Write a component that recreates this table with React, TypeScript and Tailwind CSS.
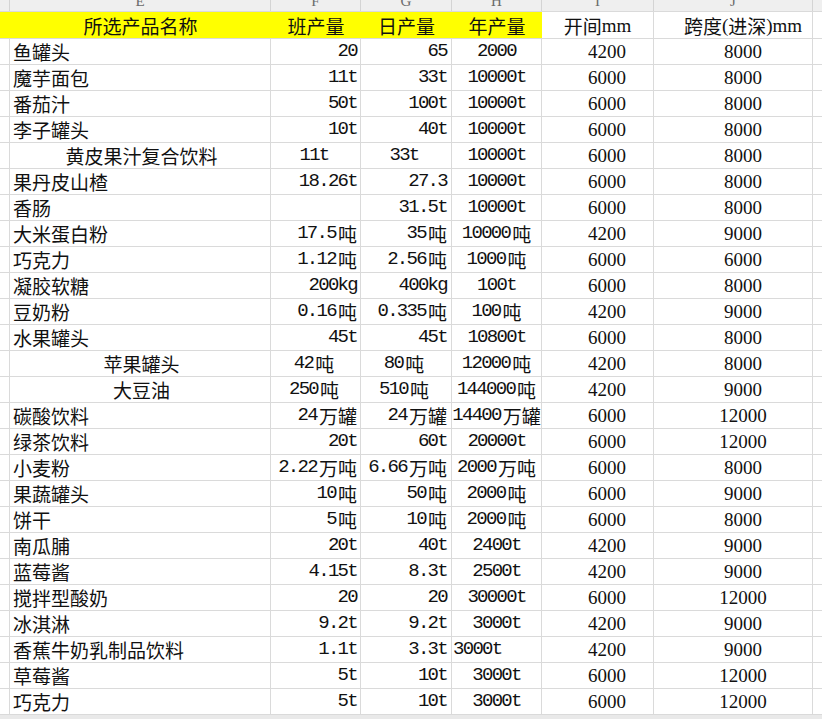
import React from "react";

type Align = "l" | "c" | "r";

type Row = {
  name: string;
  na?: Align;
  f: string;
  fa?: Align;
  g: string;
  ga?: Align;
  h: string;
  ha?: Align;
  i: string;
  j: string;
};

const rows: Row[] = [
  { name: "鱼罐头", f: "20", g: "65", h: "2000", i: "4200", j: "8000" },
  { name: "魔芋面包", f: "11t", g: "33t", h: "10000t", i: "6000", j: "8000" },
  { name: "番茄汁", f: "50t", g: "100t", h: "10000t", i: "6000", j: "8000" },
  { name: "李子罐头", f: "10t", g: "40t", h: "10000t", i: "6000", j: "8000" },
  { name: "黄皮果汁复合饮料", na: "c", f: "11t", fa: "c", g: "33t", ga: "c", h: "10000t", i: "6000", j: "8000" },
  { name: "果丹皮山楂", f: "18.26t", g: "27.3", h: "10000t", i: "6000", j: "8000" },
  { name: "香肠", f: "", g: "31.5t", h: "10000t", i: "6000", j: "8000" },
  { name: "大米蛋白粉", f: "17.5吨", g: "35吨", h: "10000吨", i: "4200", j: "9000" },
  { name: "巧克力", f: "1.12吨", g: "2.56吨", h: "1000吨", i: "6000", j: "6000" },
  { name: "凝胶软糖", f: "200kg", g: "400kg", h: "100t", i: "6000", j: "8000" },
  { name: "豆奶粉", f: "0.16吨", g: "0.335吨", h: "100吨", i: "4200", j: "9000" },
  { name: "水果罐头", f: "45t", g: "45t", h: "10800t", i: "6000", j: "8000" },
  { name: "苹果罐头", na: "c", f: "42吨", fa: "c", g: "80吨", ga: "c", h: "12000吨", i: "4200", j: "8000" },
  { name: "大豆油", na: "c", f: "250吨", fa: "c", g: "510吨", ga: "c", h: "144000吨", i: "4200", j: "9000" },
  { name: "碳酸饮料", f: "24万罐", g: "24万罐", h: "14400万罐", i: "6000", j: "12000" },
  { name: "绿茶饮料", f: "20t", g: "60t", h: "20000t", i: "6000", j: "12000" },
  { name: "小麦粉", f: "2.22万吨", g: "6.66万吨", h: "2000万吨", i: "6000", j: "8000" },
  { name: "果蔬罐头", f: "10吨", g: "50吨", h: "2000吨", i: "6000", j: "9000" },
  { name: "饼干", f: "5吨", g: "10吨", h: "2000吨", i: "6000", j: "8000" },
  { name: "南瓜脯", f: "20t", g: "40t", h: "2400t", i: "4200", j: "9000" },
  { name: "蓝莓酱", f: "4.15t", g: "8.3t", h: "2500t", i: "4200", j: "9000" },
  { name: "搅拌型酸奶", f: "20", g: "20", h: "30000t", i: "6000", j: "12000" },
  { name: "冰淇淋", f: "9.2t", g: "9.2t", h: "3000t", i: "4200", j: "9000" },
  { name: "香蕉牛奶乳制品饮料", f: "1.1t", g: "3.3t", h: "3000t", ha: "l", i: "4200", j: "9000" },
  { name: "草莓酱", f: "5t", g: "10t", h: "3000t", i: "6000", j: "12000" },
  { name: "巧克力", f: "5t", g: "10t", h: "3000t", i: "6000", j: "12000" },
];

const cjk = "font-['Noto_Sans_CJK_SC',sans-serif]";

// split ascii / cjk runs so half-width characters get the mono face
function Txt({ text, serif }: { text: string; serif?: boolean }) {
  const parts = text.match(/[\x00-\x7f]+|[^\x00-\x7f]+/g) || [];
  return (
    <>
      {parts.map((p, k) => {
        if (!/^[\x00-\x7f]+$/.test(p)) return <span key={k}>{p}</span>;
        if (serif)
          return (
            <span key={k} className="font-['Liberation_Serif',serif]">
              {p}
            </span>
          );
        const more = k < parts.length - 1;
        return (
          <span
            key={k}
            className={`font-['Liberation_Mono',monospace] tracking-[-1.7px] ${more ? "mr-[2px]" : ""}`}
          >
            {p}
          </span>
        );
      })}
    </>
  );
}

const alignCls = (a: Align | undefined, def: Align) => {
  const v = a || def;
  if (v === "l") return "justify-start";
  if (v === "c") return "justify-center";
  return "justify-end";
};

const line = "border-[#dadada]";

function DataRow({ r }: { r: Row }) {
  return (
    <div className={`flex h-[26px] border-b ${line}`}>
      <div className={`w-[10px] shrink-0 border-r ${line}`} />
      <div className={`w-[261px] shrink-0 border-r ${line} flex items-center pl-[3px] ${alignCls(r.na, "l")}`}>
        <Txt text={r.name} />
      </div>
      <div className={`w-[90px] shrink-0 border-r ${line} flex items-center pr-[3px] ${alignCls(r.fa, "r")} whitespace-nowrap`}>
        <Txt text={r.f} />
      </div>
      <div className={`w-[91px] shrink-0 border-r ${line} flex items-center pr-[4px] ${alignCls(r.ga, "r")} whitespace-nowrap`}>
        <Txt text={r.g} />
      </div>
      <div className={`w-[90px] shrink-0 border-r ${line} flex items-center ${r.ha === "l" ? "pl-[1px]" : ""} ${alignCls(r.ha, "c")} whitespace-nowrap`}>
        <Txt text={r.h} />
      </div>
      <div className={`w-[112px] shrink-0 border-r ${line} flex items-center justify-center pl-[19px] font-['Liberation_Serif',serif]`}>
        {r.i}
      </div>
      <div className={`w-[159px] shrink-0 border-r ${line} flex items-center justify-center pl-[20px] font-['Liberation_Serif',serif]`}>
        {r.j}
      </div>
      <div className="flex-1" />
    </div>
  );
}

export default function App() {
  const letters: [string, string][] = [
    ["", "w-[10px]"],
    ["E", "w-[261px]"],
    ["F", "w-[90px]"],
    ["G", "w-[91px]"],
    ["H", "w-[90px]"],
    ["I", "w-[112px]"],
    ["J", "w-[159px]"],
  ];

  return (
    <div className={`w-[822px] h-[719px] overflow-hidden bg-white text-[19px] leading-none text-[#111] ${cjk}`}>
      {/* column letters, scrolled so only their lower part shows */}
      <div className={`flex h-[12px] bg-[#efefef] border-b ${line} overflow-hidden`}>
        {letters.map(([l, w], k) => (
          <div
            key={k}
            className={`${w} shrink-0 border-r border-[#d4d4d4] flex justify-center overflow-hidden`}
          >
            <span className="font-['Liberation_Serif',serif] text-[15px] leading-none text-[#6b6b6b] mt-[-6px]">
              {l}
            </span>
          </div>
        ))}
        <div className="flex-1" />
      </div>

      {/* header row */}
      <div className={`flex h-[27px] border-b ${line}`}>
        <div className="w-[542px] shrink-0 flex bg-[#ffff00]">
          <div className="w-[10px] shrink-0" />
          <div className="w-[261px] shrink-0 flex items-center justify-center">所选产品名称</div>
          <div className="w-[90px] shrink-0 flex items-center justify-center">班产量</div>
          <div className="w-[91px] shrink-0 flex items-center justify-center">日产量</div>
          <div className="w-[90px] shrink-0 flex items-center justify-center">年产量</div>
        </div>
        <div className={`w-[112px] shrink-0 border-r ${line} flex items-center justify-center`}>
          <Txt text="开间mm" serif />
        </div>
        <div className={`w-[159px] shrink-0 border-r ${line} flex items-center justify-center pl-[20px]`}>
          <Txt text="跨度(进深)mm" serif />
        </div>
        <div className="flex-1" />
      </div>

      {rows.map((r, k) => (
        <DataRow key={k} r={r} />
      ))}

      <div className="h-[4px] bg-[#e9e9e9]" />
    </div>
  );
}
